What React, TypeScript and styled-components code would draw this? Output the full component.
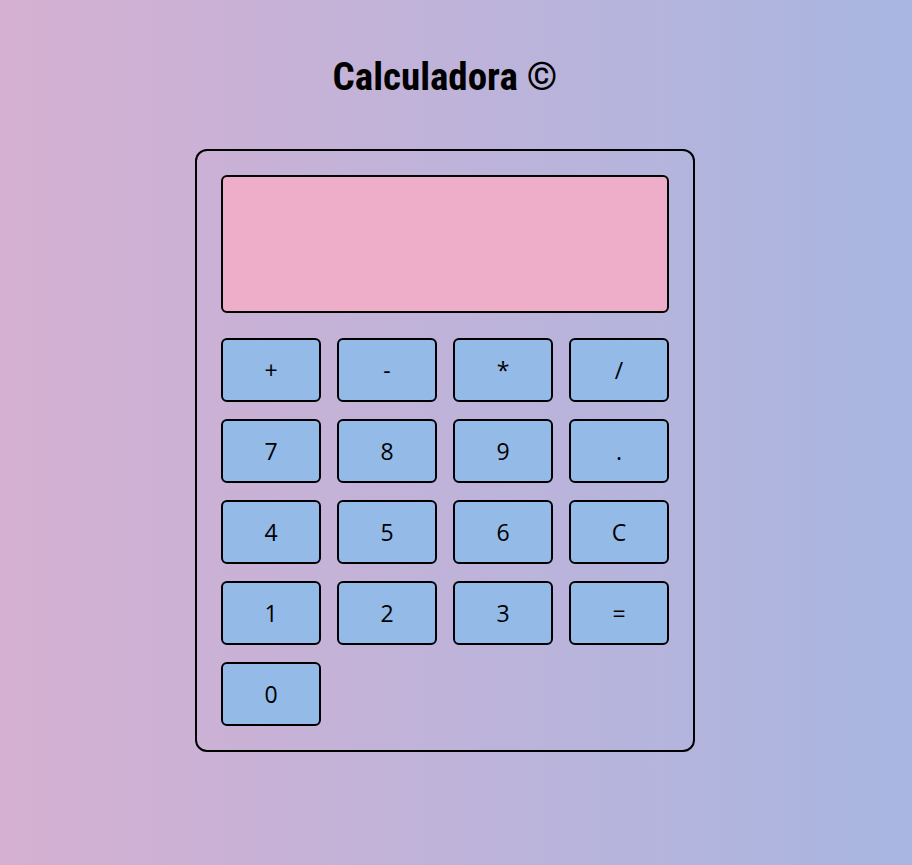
import styled, { createGlobalStyle } from "styled-components";

const Global = createGlobalStyle`
  html, body { margin: 0; padding: 0; }
  body { font-family: "Open Sans", "Liberation Sans", sans-serif; }
`;

const keys = ["+", "-", "*", "/", "7", "8", "9", ".", "4", "5", "6", "C", "1", "2", "3", "=", "0"];

export default function App() {
  return (
    <>
      <Global />
      <Page>
        <Title>Calculadora ©</Title>
        <Calc>
          <Display />
          <Keys>
            {keys.map(k => (
              <Key key={k}>{k}</Key>
            ))}
          </Keys>
        </Calc>
      </Page>
    </>
  );
}

const Page = styled.div`
  min-height: 100vh;
  box-sizing: border-box;
  padding: 56px 22px 0 0;
  background: linear-gradient(to right, #d5b0d2, #a8b6e1);
  display: flex; flex-direction: column; align-items: center;
`;
const Title = styled.h1`
  margin: 0 0 51px;
  font-family: Roboto, "DejaVu Sans Condensed", sans-serif;
  font-stretch: 80%;
  font-weight: 700;
  font-size: 39px;
  line-height: 42px;
  color: #000;
`;
const Calc = styled.div`
  width: 500px; box-sizing: border-box;
  border: 2px solid #000; border-radius: 12px;
  padding: 24px;
  display: flex; flex-direction: column; gap: 25px;
`;
const Display = styled.div`
  height: 138px; box-sizing: border-box;
  background: #eeadc8;
  border: 2px solid #000; border-radius: 6px;
`;
const Keys = styled.div`
  display: grid;
  grid-template-columns: repeat(4, 100px);
  column-gap: 16px; row-gap: 17px;
`;
const Key = styled.button`
  height: 64px; box-sizing: border-box;
  background: #94bae8;
  border: 2px solid #000; border-radius: 6px;
  font-family: "Open Sans", "Liberation Sans", sans-serif;
  font-size: 23px; color: #000;
  padding: 0;
  cursor: pointer;
`;
